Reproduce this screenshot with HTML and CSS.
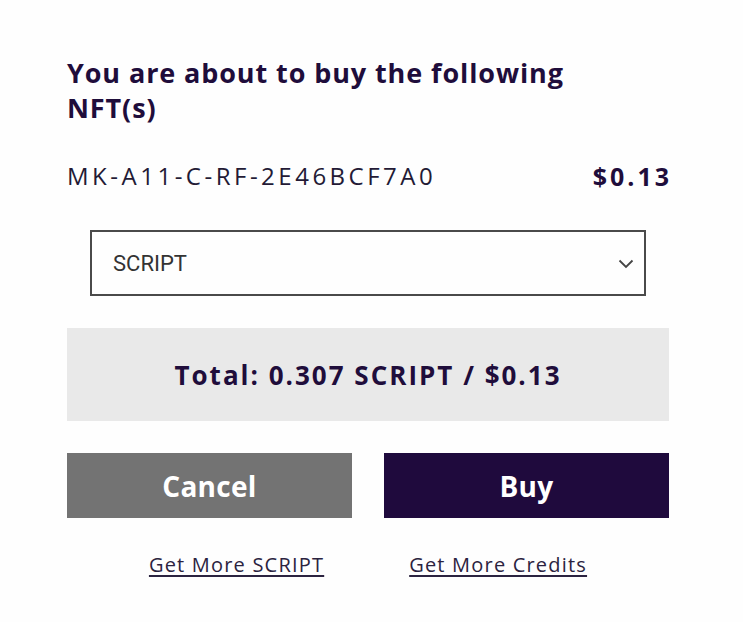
FILE: index.html
```html
<!DOCTYPE html>
<html>
<head>
<meta charset="utf-8">
<link rel="stylesheet" href="styles.css">
</head>
<body>
<div class="modal">
  <h1 class="title">You are about to buy the following NFT(s)</h1>
  <div class="item">
    <span class="item-name">MK-A11-C-RF-2E46BCF7A0</span>
    <span class="item-price">$0.13</span>
  </div>
  <div class="select">
    <span class="select-value">SCRIPT</span>
    <svg class="chevron" width="16" height="10" viewBox="0 0 16 10"><path d="M1.5 1.5 L8 8 L14.5 1.5" fill="none" stroke="#444" stroke-width="1.8"/></svg>
  </div>
  <div class="total">Total: 0.307 SCRIPT / $0.13</div>
  <div class="buttons">
    <button class="btn btn-cancel">Cancel</button>
    <button class="btn btn-buy">Buy</button>
  </div>
  <div class="links">
    <a class="link" href="#">Get More SCRIPT</a>
    <a class="link" href="#">Get More Credits</a>
  </div>
</div>
</body>
</html>
```
FILE: styles.css
```css
html, body {
  margin: 0;
  padding: 0;
  background: #fefefe;
}
.modal {
  width: 602px;
  padding: 55px 0 0 67px;
  font-family: "Open Sans", "Liberation Sans", sans-serif;
  color: #1f0d3b;
}
.title {
  margin: 0;
  font-size: 27px;
  line-height: 35px;
  font-weight: 700;
  letter-spacing: 0.9px;
  width: 560px;
}
.item {
  margin-top: 36px;
  display: flex;
  justify-content: space-between;
  align-items: center;
  line-height: 30px;
}
.item-name {
  font-size: 24px;
  font-weight: 400;
  letter-spacing: 3.5px;
  color: #231a35;
}
.item-price {
  font-size: 25px;
  font-weight: 700;
  letter-spacing: 3px;
  margin-right: -3px;
}
.select {
  margin: 39px 23px 0 23px;
  height: 62px;
  border: 2px solid #4a4a4a;
  display: flex;
  align-items: center;
  justify-content: space-between;
  padding: 0 10px 0 21px;
  font-family: Roboto, sans-serif;
  font-size: 22px;
  color: #333;
}
.chevron {
  margin-top: 2px;
}
.total {
  margin-top: 32px;
  height: 93px;
  background: #e9e9e9;
  display: flex;
  align-items: center;
  justify-content: center;
  font-size: 26px;
  font-weight: 700;
  letter-spacing: 2px;
}
.buttons {
  margin-top: 32px;
  display: flex;
  gap: 32px;
}
.btn {
  flex: 1;
  height: 65px;
  border: none;
  font-family: "Open Sans", "Liberation Sans", sans-serif;
  font-size: 28px;
  font-weight: 700;
  letter-spacing: 0.3px;
  color: #fff;
  padding: 0;
}
.btn-cancel {
  background: #737373;
}
.btn-buy {
  background: #1f0a3d;
}
.links {
  margin-top: 34px;
  display: flex;
  justify-content: center;
  gap: 85px;
  line-height: 26px;
}
.link {
  font-size: 20px;
  letter-spacing: 1.2px;
  color: #2b2340;
  text-decoration: underline;
  text-underline-offset: 3px;
}
```
